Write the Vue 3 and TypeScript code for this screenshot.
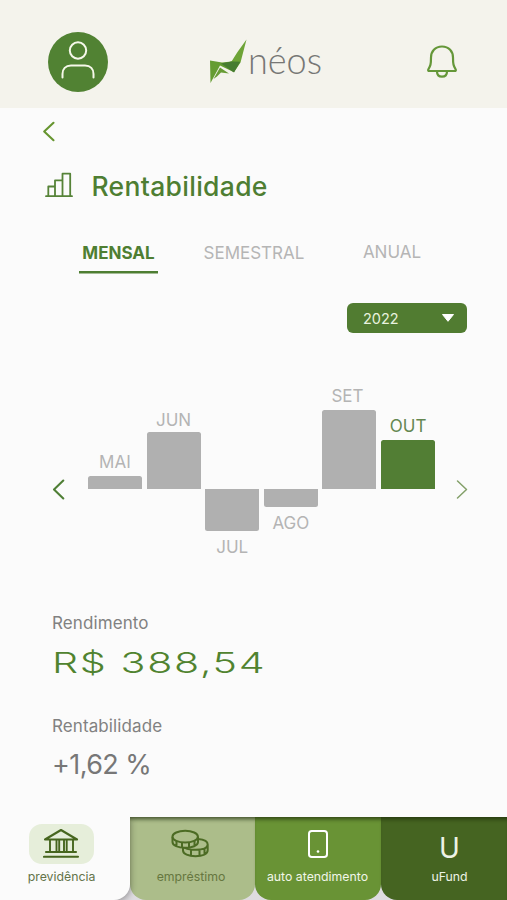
<script setup lang="ts">
import { ref } from 'vue'

interface Month {
  label: string
  value: number
  shift: number
  gap: number
}

const periods = ['MENSAL', 'SEMESTRAL', 'ANUAL']
const period = ref('MENSAL')

const months: Month[] = [
  { label: 'MAI', value: 13.5, shift: 0, gap: 4 },
  { label: 'JUN', value: 57, shift: 0, gap: 2 },
  { label: 'JUL', value: -42, shift: 0, gap: 5.5 },
  { label: 'AGO', value: -17.5, shift: 0, gap: 6 },
  { label: 'SET', value: 79.5, shift: -2, gap: 4 },
  { label: 'OUT', value: 49, shift: 0, gap: 4 },
]
const selected = ref('OUT')
</script>

<template>
  <main class="screen">
    <header class="top">
      <button class="avatar" aria-label="Perfil">
        <svg width="60" height="60" viewBox="0 0 60 60" fill="none" stroke="#f6f8ea" stroke-width="2" stroke-linecap="round">
          <circle cx="30" cy="18.500" r="8.200" />
          <path d="M14.500 45.500V42C14.500 37 17.500 33.500 23 33.500H37C42.500 33.500 45.500 37 45.500 42V45.500" />
        </svg>
      </button>
      <div class="brand">
        <svg width="38" height="46" viewBox="0 0 38 46">
          <path d="M37.500.5 31.500 23.500 25 33 16 24.500 22.500 22.500 28.500 13Z" fill="#6da336" />
          <path d="M1 21.500 13 23.500 22.500 22.500 30.700 22.800 24.500 33 11 26.500 1.500 44Z" fill="#659c31" />
          <path d="M12 24.500 22.500 22.500 31.300 22.800 25 33.500Z" fill="#467c31" />
          <path d="M4.500 40 11 28.500 20 34.500 12 33.500 8 37.500Z" fill="#689c35" />
        </svg>
        <svg class="wordmark" width="82" height="56" viewBox="0 0 82 56">
          <text x="0" y="40" textLength="74" lengthAdjust="spacingAndGlyphs">néos</text>
        </svg>
      </div>
      <button class="bell" aria-label="Notificações">
        <svg width="32" height="36" viewBox="0 0 32 36" fill="none" stroke="#659739" stroke-width="2.200" stroke-linejoin="round">
          <path d="M16 2.500C9 2.500 5 7.500 5 13.500C5 20.500 4.500 21.500 2.300 25.500Q1.700 27 3.300 27H28.700Q30.300 27 29.700 25.500C27.500 21.500 27 20.500 27 13.500C27 7.500 23 2.500 16 2.500Z" />
          <path d="M11 27.500C11 31 13 32.700 16 32.700S21 31 21 27.500" />
        </svg>
      </button>
    </header>

    <div class="back">
      <svg width="14" height="22" viewBox="0 0 14 22" fill="none" stroke="#66952f" stroke-width="2.100" stroke-linecap="round" stroke-linejoin="round">
        <path d="M11.500 2.800 2.200 11.500 11.500 20.200" />
      </svg>
    </div>

    <div class="title">
      <svg width="28" height="26" viewBox="0 0 28 26" fill="none" stroke="#568338" stroke-width="1.800" stroke-linejoin="round" stroke-linecap="round">
        <path d="M1 24.200H27M3.300 24V14.500H10V24M10 14.500V8.300H17.500V24M17.500 8.300V1.700H25.200V24" />
      </svg>
      <h1>Rentabilidade</h1>
    </div>

    <nav class="periods">
      <button v-for="p in periods" :key="p" :class="['period', p.toLowerCase(), { active: p === period }]" @click="period = p">{{ p }}</button>
    </nav>

    <div class="filter">
      <button class="year">
        <span>2022</span>
        <svg width="14" height="8" viewBox="0 0 14 8"><path d="M1.500.5H12.500L7 7.300Z" fill="#fff" stroke="#fff" stroke-linejoin="round" /></svg>
      </button>
    </div>

    <section class="chart">
      <svg class="arrow" width="14" height="22" viewBox="0 0 14 22" fill="none" stroke="#4f7f35" stroke-width="2.100" stroke-linecap="round" stroke-linejoin="round">
        <path d="M12.300 2.500 3 11.500 12.300 20.500" />
      </svg>
      <div class="bars">
        <div v-for="m in months" :key="m.label" :class="['month', { down: m.value < 0, active: m.label === selected }]" :style="{ gap: m.gap + 'px' }" @click="selected = m.label">
          <span :style="{ marginLeft: m.shift * 2 + 'px' }">{{ m.label }}</span>
          <div class="bar" :style="{ height: Math.abs(m.value) + 'px' }"></div>
        </div>
      </div>
      <svg class="arrow" width="14" height="22" viewBox="0 0 14 22" fill="none" stroke="#83a069" stroke-width="1.500" stroke-linecap="round" stroke-linejoin="round">
        <path d="M1.500 3 10.500 11.500 1.500 20" />
      </svg>
    </section>

    <section class="figures">
      <p class="caption">Rendimento</p>
      <p class="amount"><span>R$ 388,54</span></p>
      <p class="caption second">Rentabilidade</p>
      <p class="rate">+1,62 %</p>
    </section>

    <footer class="tabs">
      <a class="tab pension">
        <span class="pill">
          <svg width="38" height="32" viewBox="0 0 38 32" fill="none" stroke="#47661f" stroke-width="2.100" stroke-linejoin="round" stroke-linecap="round">
            <path d="M2 11.500 18 2 34 11.500ZM3 24H33M1 28.800H35" />
            <path d="M7 12V23.500M13.500 12V23.500M16.200 12V23.500M21 12V23.500M23.700 12V23.500M30 12V23.500" stroke-width="1.900" />
          </svg>
        </span>
        <span class="name">previdência</span>
      </a>
      <a class="tab loan">
        <span class="pill">
          <svg width="38" height="30" viewBox="0 0 38 30" fill="none" stroke="#4c6b24" stroke-width="2">
            <path d="M27 10C33 10.500 36.700 12.500 36.700 15.500C36.700 19 31 20.700 24.500 20.700C18.500 20.700 13.500 19.500 12 17.500M36.700 15.500V21C36.700 25 31.500 27.200 24.500 27.200S12 25 12 21.500V18M20 20.700V27M28.500 20.700V27M33.500 19V25" />
            <path d="M1.500 7.700V13C1.500 16.500 7 18.800 14 18.800S27 16.500 27 13V7.700M5.500 12V17.500M11 13.500V18.800M18 13.500V18.800M23.500 12V17" fill="#acbd8a" />
            <ellipse cx="14.200" cy="7.700" rx="12.700" ry="5.900" fill="#acbd8a" />
          </svg>
        </span>
        <span class="name">empréstimo</span>
      </a>
      <a class="tab service">
        <span class="pill">
          <svg width="22" height="30" viewBox="0 0 22 30" fill="none" stroke="#fff" stroke-width="2">
            <rect x="2" y="2" width="18" height="26" rx="2.800" /><circle cx="11" cy="22.500" r="1.300" fill="#fff" stroke="none" />
          </svg>
        </span>
        <span class="name">auto atendimento</span>
      </a>
      <a class="tab fund">
        <span class="pill letter">U</span>
        <span class="name">uFund</span>
      </a>
    </footer>
  </main>
</template>

<style>
body { background: #fbfbfb; }
</style>

<style scoped>
.screen {
  display: flex;
  flex-direction: column;
  width: 507px;
  height: 900px;
  overflow: hidden;
  background: #fbfbfb;
  font-family: Inter, "Liberation Sans", sans-serif;
}
button { border: 0; padding: 0; background: none; font: inherit; }
svg { display: block; flex: none; }
p, h1 { margin: 0; }

.top {
  box-sizing: border-box;
  display: grid;
  grid-template-columns: 161px 1fr 32px;
  align-items: center;
  height: 108px;
  padding: 16px 49px 0 48px;
  background: #f4f3ec;
}
.avatar { width: 60px; height: 60px; border-radius: 50%; background: #518233; }
.brand { display: flex; align-items: center; }
.wordmark { margin: 0 0 0 1px; }
.wordmark text { font: 300 37px Lato, sans-serif; fill: #777775; }

.back { height: 52px; padding: 12px 0 0 42px; box-sizing: border-box; }

.title { display: flex; align-items: center; gap: 18.500px; height: 50px; padding-left: 45px; }
h1 { margin-top: 1px; font-size: 26.500px; line-height: 40px; font-weight: 500; letter-spacing: 0.300px; color: #4e7e32; }

.periods { display: flex; height: 64px; padding: 25px 0 0 79px; box-sizing: border-box; }
.period {
  height: 38.500px;
  box-sizing: border-box;
  font-size: 17px;
  line-height: 36px;
  padding-bottom: 2.500px;
  color: #b5b5b5;
  white-space: nowrap;
}
.period.active {
  width: 79px;
  font-weight: 700;
  color: #4e7e32;
  background: linear-gradient(#4e7e32, #4e7e32) 0 100% / 100% 2.500px no-repeat;
}
.semestral { margin-left: 45.500px; width: 100px; }
.anual { margin-left: 59px; width: 59px; line-height: 34px; padding-bottom: 4.500px; }

.filter { display: flex; justify-content: flex-end; height: 60px; padding: 29px 40px 0 0; box-sizing: border-box; }
.year {
  display: flex;
  justify-content: space-between;
  align-items: center;
  width: 120px;
  height: 30px;
  padding: 0 12px 0 16px;
  border-radius: 6px;
  background: #517c31;
  color: #e8f2df;
  font-size: 14.500px;
}

.chart { display: flex; align-items: flex-start; height: 256px; padding: 0 37px 0 51px; box-sizing: border-box; justify-content: space-between; }
.arrow { margin-top: 144px; }
.bars { display: grid; grid-template-columns: repeat(6, 54px); column-gap: 4.650px; margin-right: -2px; }
.month {
  display: flex;
  flex-direction: column;
  justify-content: flex-end;
  align-items: center;
  height: 155.400px;
  color: #b4b4b4;
  font-size: 17px;
  line-height: 20px;
}
.bar { width: 54px; border-radius: 2.500px 2.500px 0 0; background: #b0b0b0; }
.month.down { flex-direction: column-reverse; margin-top: 155.400px; height: 70px; }
.down .bar { border-radius: 0 0 2.500px 2.500px; }
.month.active { color: #648750; }
.active .bar { background: #527e34; }

.figures { display: flex; flex-direction: column; height: 227px; padding: 23px 0 0 52px; box-sizing: border-box; }
.caption { font-size: 17px; line-height: 20px; letter-spacing: 0.100px; color: #818181; }
.amount { height: 40px; margin-top: 10px; }
.amount span {
  display: inline-block;
  transform: scaleX(1.420);
  transform-origin: 0 50%;
  font-size: 29px;
  font-weight: 300;
  line-height: 40px;
  letter-spacing: 1.150px;
  color: #50832f;
}
.second { margin-top: 33px; }
.rate { margin-top: 9px; font-size: 27px; line-height: 40px; letter-spacing: -0.600px; color: #777; }

.tabs { display: grid; grid-template-columns: 130px 125px 126px 126px; height: 83px; background: #dedce0; }
.tab {
  box-sizing: border-box;
  display: flex;
  flex-direction: column;
  align-items: center;
  padding: 7px 1px 0 0;
  border-radius: 0 0 16px 16px;
  font-size: 12.300px;
  box-shadow: inset 0 5px 4px -3px rgba(25, 40, 8, 0.75);
}
.pill { display: flex; justify-content: center; align-items: center; width: 65px; height: 40px; border-radius: 13px; }
.name { margin-top: 4px; line-height: 18px; }
.pension { padding-right: 7px; background: #fbfbfb; color: #647449; border-radius: 0 0 16px 0; box-shadow: 1px 2px 6px rgba(0, 0, 0, 0.3); clip-path: inset(0 -8px 0 0); }
.pension .pill { background: #e6eeda; }
.loan { padding-right: 3px; background: #acbd8a; color: #66773f; }
.loan .pill { padding-right: 2px; box-sizing: border-box; }
.service { background: #699335; color: #f1f6e9; }
.fund { padding-left: 12px; background: #456421; color: #edf3e5; border-radius: 0 0 0 16px; }
.letter { box-sizing: border-box; font-size: 28px; font-weight: 400; padding-top: 7px; }
</style>
